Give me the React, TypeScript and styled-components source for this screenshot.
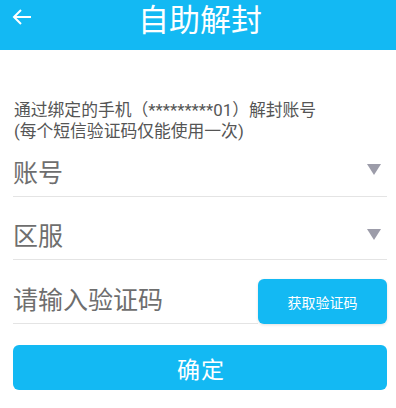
import React from "react";
import styled, { createGlobalStyle } from "styled-components";

const Global = createGlobalStyle`
  html, body { margin: 0; padding: 0; background: #ffffff; }
  body { font-family: "Roboto", "Noto Sans CJK SC", sans-serif; }
  * { box-sizing: border-box; }
`;

const BLUE = "#13b9f3";

const Page = styled.div`
  width: 396px;
  height: 408px;
  background: #fff;
  overflow: hidden;
`;

const Header = styled.header`
  height: 50px;
  background: ${BLUE};
  display: grid;
  grid-template-columns: 1fr auto 1fr;
  align-items: center;
`;

const Back = styled.div`
  padding-left: 12px;
  display: flex;
  align-items: center;
  height: 100%;
  padding-bottom: 17px;
`;

const Title = styled.h1`
  margin: 0;
  font-size: 31px;
  font-weight: 400;
  color: #fff;
  line-height: 40px;
  padding-bottom: 8px;
  padding-left: 4px;
`;

const Content = styled.div`
  padding: 0 9px 0 13px;
`;

const Info = styled.p`
  margin: 50px 0 0 1px;
  font-size: 16.8px;
  line-height: 21px;
  color: #555555;
`;

const Row = styled.div<{ $gap: number }>`
  margin-top: ${(p) => p.$gap}px;
  display: flex;
  align-items: flex-end;
`;

const Field = styled.div`
  flex: 1;
  height: 51px;
  border-bottom: 1px solid #e4e4e4;
  display: flex;
  align-items: center;
  justify-content: space-between;
  font-size: 25px;
  color: #6e6e6e;
  padding: 0 6px 0 0;
`;

const Caret = styled.span<{ $up: number }>`
  width: 0;
  height: 0;
  border-left: 7px solid transparent;
  border-right: 7px solid transparent;
  border-top: 11px solid #9c9ca9;
  margin-bottom: ${(p) => p.$up}px;
`;

const CodeButton = styled.button`
  width: 129px;
  height: 45px;
  border: none;
  border-radius: 6px;
  background: ${BLUE};
  color: #fff;
  font-family: inherit;
  font-size: 14px;
  box-shadow: 0 1px 3px rgba(0, 0, 0, 0.12);
  padding: 0;
`;

const Confirm = styled.button`
  display: block;
  width: 374px;
  height: 45px;
  margin-top: 21px;
  border: none;
  border-radius: 6px;
  background: ${BLUE};
  color: #fff;
  font-family: inherit;
  font-size: 23px;
  letter-spacing: 1px;
  padding: 0 0 0 2px;
`;

const ArrowIcon = () => (
  <svg width="20" height="16" viewBox="0 0 20 16" fill="none">
    <path d="M2 8H19" stroke="#fff" strokeWidth="2" />
    <path d="M9 1L2 8L9 15" stroke="#fff" strokeWidth="2" />
  </svg>
);

export default function App() {
  return (
    <Page>
      <Global />
      <Header>
        <Back>
          <ArrowIcon />
        </Back>
        <Title>自助解封</Title>
        <div />
      </Header>
      <Content>
        <Info>
          通过绑定的手机（*********01）解封账号
          <br />
          (每个短信验证码仅能使用一次)
        </Info>
        <Row $gap={4}>
          <Field>
            账号
            <Caret $up={4} />
          </Field>
        </Row>
        <Row $gap={12}>
          <Field>
            区服
            <Caret $up={0} />
          </Field>
        </Row>
        <Row $gap={13}>
          <Field>请输入验证码</Field>
          <CodeButton>获取验证码</CodeButton>
        </Row>
        <Confirm>确定</Confirm>
      </Content>
    </Page>
  );
}
